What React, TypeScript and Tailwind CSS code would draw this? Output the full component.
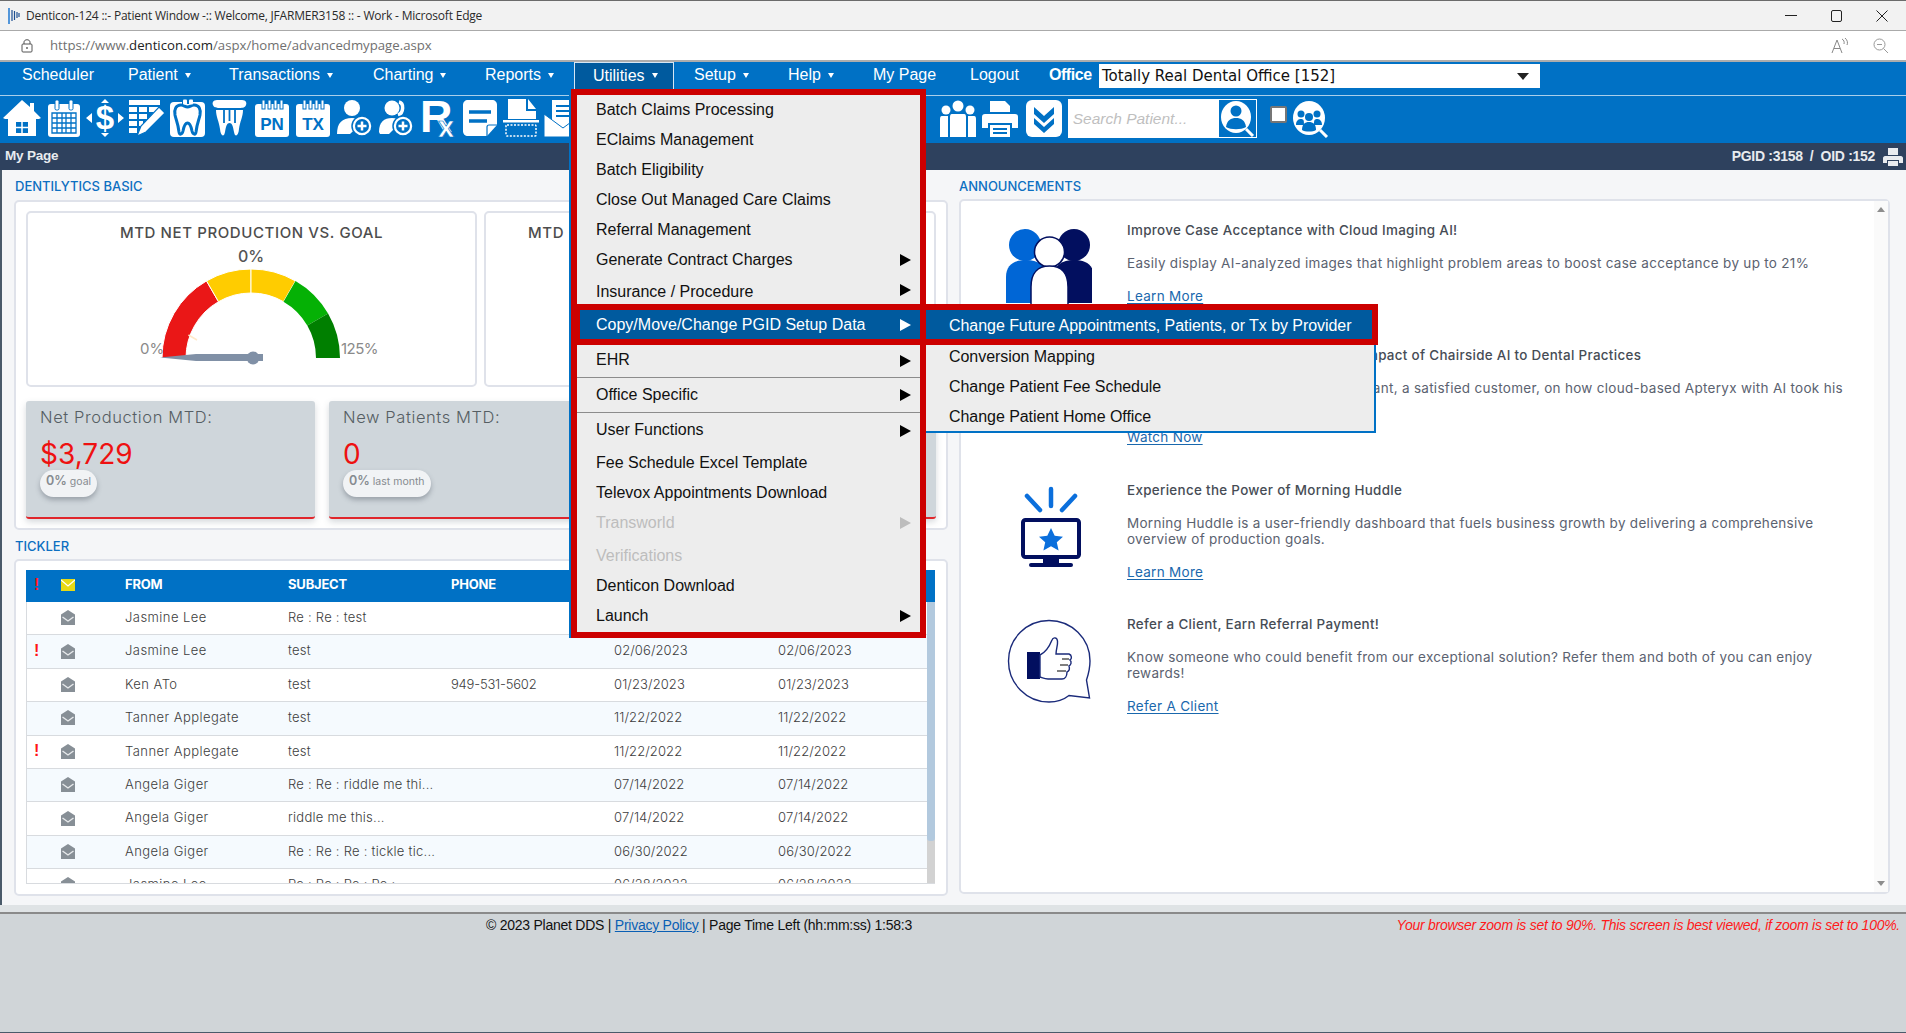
import React from "react";

const B = "#0071c5";

function Ico({ children }: { children: React.ReactNode }) {
  return (
    <svg width="38" height="38" viewBox="0 0 38 38" className="shrink-0">
      {children}
    </svg>
  );
}

function Rings() {
  return (
    <>
      <rect x="2" y="5" width="34" height="33" rx="3" fill="#fff" />
      {[9, 15, 21, 27].map((x) => (
        <rect key={x} x={x} y="1" width="3" height="9" fill="#fff" stroke={B} strokeWidth="1" />
      ))}
    </>
  );
}

const toolIcons: React.ReactNode[] = [
  <Ico key="home">
    <path fill="#fff" d="M19 1 L27 8 V4 H31 V12 L38 19 L36 20 H33 V37 H5 V20 H2 L0 19Z" />
    <rect x="13" y="23" width="12" height="11" fill={B} />
    <path d="M19 23V34M13 28.5H25" stroke="#fff" strokeWidth="1.5" />
  </Ico>,
  <Ico key="cal">
    <rect x="3" y="5" width="32" height="33" rx="3" fill="#fff" />
    <rect x="10" y="1" width="4" height="10" rx="1.5" fill="#fff" stroke={B} strokeWidth="1" />
    <rect x="24" y="1" width="4" height="10" rx="1.5" fill="#fff" stroke={B} strokeWidth="1" />
    <path d="M7 14H31V34H7ZM7 19H31M7 24H31M7 29H31M12 14V34M17 14V34M21 14V34M26 14V34" fill="none" stroke={B} strokeWidth="1.3" />
  </Ico>,
  <Ico key="dollar">
    <text x="19" y="30" textAnchor="middle" fontSize="33" fontWeight="700" fill="#fff" fontFamily="Liberation Sans">$</text>
    <path fill="#fff" d="M0 19L6 14V24ZM38 19L32 14V24ZM19 0L15 4H23ZM19 38L15 34H23Z" />
  </Ico>,
  <Ico key="edit">
    <path fill="#fff" d="M1 1H32V6H1ZM1 8H9V13H1ZM11 8H19V13H11ZM21 8H30V13H21ZM1 15H9V20H1ZM11 15H19V20H11ZM1 22H9V27H1ZM11 22H15V27H11ZM1 29H9V34H1Z" />
    <path fill="#fff" stroke={B} strokeWidth="1.2" d="M31 8L37 14L18 33L9 37L13 27Z" />
  </Ico>,
  <Ico key="tooth">
    <rect x="1" y="3" width="35" height="35" rx="4" fill="#fff" />
    <path fill="#fff" stroke={B} strokeWidth="3" d="M12 6C7 6 5 10 6 16C7 21 9 24 10 33C10.5 36 13 36 14 32C15 27 16 24 18.5 24C21 24 22 27 23 32C24 36 26.5 36 27 33C28 24 30 21 31 16C32 10 30 6 25 6C22 6 21 8 18.5 8C16 8 15 6 12 6Z" />
    <rect x="13" y="0" width="11" height="5" fill={B} />
    <rect x="14" y="0.5" width="4" height="5" rx="1" fill="#fff" />
    <rect x="20" y="0.5" width="4" height="5" rx="1" fill="#fff" />
  </Ico>,
  <Ico key="crown">
    <path fill="#fff" d="M6 1H31C35 1 36 4 35 6C34 9 31 9 27 9H10C6 9 3 9 2 6C1 4 2 1 6 1Z" />
    <path fill="#fff" d="M5 11H32C32 18 29 22 28 30C27.5 37 24 39 23 33C22 27 21 24 18.5 24C16 24 15 27 14 33C13 39 9.5 37 9 30C8 22 5 18 5 11Z" />
    <path d="M13 11V24M18.5 11V22M24 11V24" stroke={B} strokeWidth="1.8" />
  </Ico>,
  <Ico key="pn">
    <Rings />
    <text x="19" y="31" textAnchor="middle" fontSize="17" fontWeight="700" fill={B} fontFamily="Liberation Sans">PN</text>
  </Ico>,
  <Ico key="tx">
    <Rings />
    <text x="19" y="31" textAnchor="middle" fontSize="17" fontWeight="700" fill={B} fontFamily="Liberation Sans">TX</text>
  </Ico>,
  <Ico key="addp">
    <circle cx="16" cy="9" r="8" fill="#fff" />
    <path fill="#fff" d="M1 35C1 24 6 19 16 19C20 19 24 21 26 24L14 35Z" />
    <circle cx="26" cy="27" r="10" fill="#fff" stroke={B} strokeWidth="1.5" />
    <circle cx="26" cy="27" r="7" fill={B} />
    <path d="M26 22.5V31.5M21.5 27H30.5" stroke="#fff" strokeWidth="2.5" />
  </Ico>,
  <Ico key="addps">
    <circle cx="15" cy="9" r="7.5" fill="#fff" />
    <path fill="none" stroke="#fff" strokeWidth="3.5" d="M22 3C27 4 27 14 21 16" />
    <path fill="#fff" d="M2 33C2 23 7 19 15 19C19 19 22 20 24 23L12 35H3Z" />
    <circle cx="26" cy="27" r="10" fill="#fff" stroke={B} strokeWidth="1.5" />
    <circle cx="26" cy="27" r="7" fill={B} />
    <path d="M26 22.5V31.5M21.5 27H30.5" stroke="#fff" strokeWidth="2.5" />
  </Ico>,
  <Ico key="rx">
    <text x="1" y="33" fontSize="45" fontWeight="700" fill="#fff" fontFamily="Liberation Sans">R</text>
    <text x="19" y="37.5" fontSize="29" fontWeight="700" fill="#fff" stroke={B} strokeWidth="0.6" fontFamily="Liberation Sans">x</text>
  </Ico>,
  <Ico key="note">
    <path fill="#fff" d="M7 1H31C34 1 36 3 36 6V26L26 37H7C4 37 2 35 2 32V6C2 3 4 1 7 1Z" />
    <path d="M8 13H30M8 22H26" stroke={B} strokeWidth="3.5" />
    <path d="M26 37V28C26 27 27 26 28 26H36" fill="none" stroke={B} strokeWidth="1.2" />
  </Ico>,
  <Ico key="scan">
    <path fill="#fff" d="M6 0H24V12H34V20H6ZM26 0L34 10H26Z" />
    <rect x="1" y="21" width="36" height="2.5" fill="#fff" />
    <rect x="4" y="26" width="30" height="11" rx="1" fill="none" stroke="#fff" strokeWidth="1.5" strokeDasharray="2 1.5" />
  </Ico>,
  <Ico key="mail">
    <path fill="#fff" d="M8 1H36V20L20 30L8 22Z" />
    <path d="M12 7H32M12 12H32M12 17H28" stroke={B} strokeWidth="2" />
    <path fill="#fff" stroke={B} strokeWidth="1" d="M0 15L19 29L38 15V38H0Z" />
  </Ico>,
];

const navItems = [
  { t: "Scheduler", w: "w-[106px]" },
  { t: "Patient", w: "w-[101px]", a: true },
  { t: "Transactions", w: "w-[144px]", a: true },
  { t: "Charting", w: "w-[112px]", a: true },
  { t: "Reports", w: "w-[89px]", a: true },
];
const navItems2 = [
  { t: "Setup", w: "w-[114px] pl-[20px]", a: true },
  { t: "Help", w: "w-[85px]", a: true },
  { t: "My Page", w: "w-[97px]" },
  { t: "Logout", w: "w-[79px]" },
];

function Caret() {
  return <span className="ml-[7px] inline-block border-x-[3px] border-t-[5px] border-x-transparent border-t-white align-middle" />;
}

function MailOpen() {
  return (
    <svg width="14" height="15" viewBox="0 0 14 15">
      <path fill="#878f96" d="M7 0L14 4.5V15H0V4.5Z" />
      <path d="M1.5 7L7 11L12.5 7" fill="none" stroke="#e8eaec" strokeWidth="1.4" />
    </svg>
  );
}

const rows = [
  { f: false, from: "Jasmine Lee", sub: "Re : Re : test", ph: "", d: "" },
  { f: true, from: "Jasmine Lee", sub: "test", ph: "", d: "02/06/2023" },
  { f: false, from: "Ken ATo", sub: "test", ph: "949-531-5602", d: "01/23/2023" },
  { f: false, from: "Tanner Applegate", sub: "test", ph: "", d: "11/22/2022" },
  { f: true, from: "Tanner Applegate", sub: "test", ph: "", d: "11/22/2022" },
  { f: false, from: "Angela Giger", sub: "Re : Re : riddle me thi...", ph: "", d: "07/14/2022" },
  { f: false, from: "Angela Giger", sub: "riddle me this...", ph: "", d: "07/14/2022" },
  { f: false, from: "Angela Giger", sub: "Re : Re : Re : tickle tic...", ph: "", d: "06/30/2022" },
  { f: false, from: "Jasmine Lee", sub: "Re : Re : Re : Re :", ph: "", d: "06/28/2022" },
];

function Gauge() {
  const cx = 251 - 28;
  const cy = 358 - 213;
  const R = 89;
  const r = 65;
  const seg = (a: number, b: number) => {
    const p = (rad: number, deg: number) => {
      const t = (deg * Math.PI) / 180;
      return `${(cx + rad * Math.cos(t)).toFixed(2)} ${(cy - rad * Math.sin(t)).toFixed(2)}`;
    };
    return `M${p(R, a)} A${R} ${R} 0 0 1 ${p(R, b)} L${p(r, b)} A${r} ${r} 0 0 0 ${p(r, a)} Z`;
  };
  const segs: [number, number, string][] = [
    [180, 120, "#ea1717"],
    [120, 90, "#ffcc00"],
    [90, 60, "#ffcc00"],
    [60, 30, "#05b105"],
    [30, 0, "#007f00"],
  ];
  return (
    <svg width="449" height="174" viewBox="0 0 449 174" className="absolute left-0 top-0">
      {segs.map(([a, b, c], i) => (
        <path key={i} d={seg(a, b)} fill={c} stroke="#fff" strokeWidth={i === 4 || i === 3 ? 0 : 1} />
      ))}
      <path d="M160.5 122L169 127" stroke="#ffe9c9" strokeWidth="1.6" />
      <text x={cx} y={49} textAnchor="middle" fontSize="16" fontWeight="500" fill="#555" fontFamily="Inter">0%</text>
      <text x="112" y="141" fontSize="15" fill="#8a8a8a" fontFamily="Inter">0%</text>
      <text x="313" y="141" fontSize="15" letterSpacing="-0.5" fill="#8a8a8a" fontFamily="Inter">125%</text>
      <path d="M132 144.5L168 141H235V148H168Z" fill="#8090a6" />
      <circle cx="225" cy="145" r="6.5" fill="#8090a6" />
    </svg>
  );
}

function Arrow({ white, gray }: { white?: boolean; gray?: boolean }) {
  return (
    <svg width="11" height="12" viewBox="0 0 11 12" className="absolute right-[9px] top-1/2 -translate-y-1/2">
      <path d="M0 0L11 6L0 12Z" fill={white ? "#fff" : gray ? "#bdbdbd" : "#000"} />
    </svg>
  );
}

function MI({ t, h, arrow, gray, extra }: { t: string; h: string; arrow?: boolean; gray?: boolean; extra?: string }) {
  return (
    <div className={`relative flex items-center pl-[19px] ${h} ${extra ?? ""} ${gray ? "text-[#bdbdbd]" : "text-[#111]"}`}>
      {t}
      {arrow && <Arrow gray={gray} />}
    </div>
  );
}

function SectionLabel({ t }: { t: string }) {
  return <div className="h-[16px] text-[13px] leading-[16px] font-medium text-[#0d6fc1]">{t}</div>;
}

function Stat({ label, value, pct, sub, w }: { label: string; value: string; pct: string; sub: string; w: string }) {
  return (
    <div className={`h-[118px] rounded-[3px] border-b-2 border-[#e0262b] bg-[#cfd6db] pl-[14px] pt-[6px] shadow-[0_3px_6px_rgba(120,130,140,0.3)] ${w}`}>
      <div className="h-[20px] text-[16.5px] leading-[20px] font-light tracking-[0.6px] text-[#565e63]">{label}</div>
      <div className="mt-[9px] h-[36px] text-[28px] leading-[36px] text-[#ee1111]">{value}</div>
      <div className="mt-[-2px] flex h-[27px] w-fit items-start gap-[3px] rounded-[14px] bg-[#f1f3f5] px-[6px] pt-[3px] leading-[16px] text-[#868b90] shadow-[0_3px_5px_rgba(90,100,110,0.45)]">
        <span className="text-[12.5px] font-semibold">{pct}</span>
        <span className="mt-[1px] text-[10.5px]">{sub}</span>
      </div>
    </div>
  );
}

function Ann({
  title,
  body,
  link,
  icon,
  mt,
}: {
  title: string;
  body: React.ReactNode;
  link: string;
  icon?: React.ReactNode;
  mt: string;
}) {
  return (
    <div className={`relative pl-[166px] ${mt}`}>
      {icon}
      <div className="h-[16px] whitespace-nowrap text-[13.4px] leading-[16px] font-medium tracking-[0.32px] text-[#464c55]">{title}</div>
      <div className="mt-[17px] whitespace-nowrap text-[13.5px] leading-[16px] tracking-[0.29px] text-[#5b6270]">{body}</div>
      <div className="mt-[17px] h-[16px] text-[13.5px] leading-[16px] tracking-[0.29px] text-[#1a68ad]">
        <a className="underline underline-offset-2">{link}</a>
      </div>
    </div>
  );
}

export default function App() {
  return (
    <div className="relative flex h-[1033px] w-[1906px] flex-col overflow-hidden bg-[#f5f6f8] font-['Liberation_Sans',sans-serif]">
      {/* Title bar */}
      <div className="flex h-[31px] shrink-0 items-center border-y border-t-[#6b6b6b] border-b-[#aaaaaa] bg-[#f2f2f2] pl-[8px] font-['Open_Sans',sans-serif] text-[12px] text-[#2b2b2b]">
        <svg width="12" height="16" viewBox="0 0 12 16" className="mr-[6px]">
          <path d="M1 0V16" stroke="#2b7fd4" strokeWidth="1.6" />
          <path d="M4 2V13M6.5 3V12M9 4V10M11 5V9" stroke="#1d4f91" strokeWidth="1.2" />
        </svg>
        <span className="tracking-[-0.2px]">Denticon-124 ::- Patient Window -:: Welcome, JFARMER3158 :: - Work - Microsoft Edge</span>
        <div className="ml-auto flex items-center">
          <span className="mr-[34px] h-px w-[12px] bg-[#222]" />
          <span className="mr-[34px] h-[12px] w-[11px] rounded-[2px] border border-[#222]" />
          <svg width="12" height="12" viewBox="0 0 12 12" className="mr-[18px]">
            <path d="M0.5 0.5L11.5 11.5M11.5 0.5L0.5 11.5" stroke="#222" strokeWidth="1" />
          </svg>
        </div>
      </div>
      {/* URL bar */}
      <div className="flex h-[31px] shrink-0 items-center border-b-2 border-[#adadad] bg-white pl-[21px] font-['Open_Sans',sans-serif] text-[13.2px] text-[#707070]">
        <svg width="12" height="15" viewBox="0 0 12 15" className="mr-[17px]">
          <path d="M3 6V4C3 1 9 1 9 4V6" fill="none" stroke="#555" />
          <rect x="1" y="6" width="10" height="8" rx="1" fill="none" stroke="#555" />
          <circle cx="6" cy="10" r="0.9" fill="#555" />
        </svg>
        <span>
          https://www.<span className="text-[#222]">denticon.com</span>/aspx/home/advancedmypage.aspx
        </span>
        <div className="ml-auto flex items-center">
          <svg width="18" height="16" viewBox="0 0 18 16" className="mr-[24px]">
            <path d="M1 15L6 2L11 15M3 10.5H9" fill="none" stroke="#888" strokeWidth="1" />
            <path d="M11 1C13 2 13.5 4 13 6M14 0C16.5 2 17 5 16 7" fill="none" stroke="#888" strokeWidth="1" />
          </svg>
          <svg width="16" height="16" viewBox="0 0 16 16" className="mr-[17px]">
            <circle cx="6.5" cy="6.5" r="5.5" fill="none" stroke="#999" />
            <path d="M4 6.5H9M10.5 10.5L15 15" stroke="#999" />
          </svg>
        </div>
      </div>
      {/* Nav */}
      <div className="flex h-[34px] shrink-0 items-stretch border-b border-[#a9cfeb] bg-[#0071c5] pl-[22px] text-[16px] text-white">
        {navItems.map((n) => (
          <div key={n.t} className={`flex shrink-0 items-center pb-[7px] ${n.w}`}>
            {n.t}
            {n.a && <Caret />}
          </div>
        ))}
        <div className="flex w-[100px] shrink-0 items-center border border-b-0 border-[#d5e6f4] bg-[#005a9e] pb-[7px] pl-[18px]">
          Utilities
          <Caret />
        </div>
        {navItems2.map((n) => (
          <div key={n.t} className={`flex shrink-0 items-center pb-[7px] ${n.w}`}>
            {n.t}
            {n.a && <Caret />}
          </div>
        ))}
        <div className="flex w-[50px] shrink-0 items-center pb-[7px] font-bold tracking-[-0.45px]">Office</div>
        <div className="mt-[2px] flex h-[24px] w-[441px] shrink-0 items-center bg-white pl-[3px] pt-px font-['DejaVu_Sans',sans-serif] text-[15px] text-[#111]">
          Totally Real Dental Office [152]
          <span className="ml-auto mr-[11px] border-x-[6px] border-t-[7px] border-x-transparent border-t-[#222]" />
        </div>
      </div>
      {/* Toolbar */}
      <div className="flex h-[47px] shrink-0 items-start bg-[#0071c5] pl-[3px] pt-[3px]">
        <div className="flex gap-[3.6px]">{toolIcons}</div>
        <div className="ml-[357px] flex items-center">
          <svg width="38" height="38" viewBox="0 0 38 38">
            <circle cx="19" cy="6" r="5.5" fill="#fff" />
            <circle cx="7" cy="10" r="4.5" fill="#fff" />
            <circle cx="31" cy="10" r="4.5" fill="#fff" />
            <path fill="#fff" d="M13 14H25C27 14 27 16 27 18V37H11V18C11 16 11 14 13 14Z" />
            <path fill="#fff" d="M3 16H9V37H1V20C1 18 1 16 3 16ZM29 16H35C37 16 37 18 37 20V37H29Z" />
          </svg>
          <svg width="38" height="38" viewBox="0 0 38 38" className="ml-[4px]">
            <path fill="#fff" d="M9 1H24L29 6V12H9Z" />
            <path fill="#fff" d="M4 14H34C36 14 37 15 37 17V28H31V23H7V28H1V17C1 15 2 14 4 14Z" />
            <path fill="#fff" d="M9 25H29V37H9Z" />
            <path d="M12 29H26M12 33H26" stroke={B} strokeWidth="2" />
          </svg>
          <svg width="38" height="38" viewBox="0 0 38 38" className="ml-[6px]">
            <rect x="1" y="0" width="36" height="37" rx="6" fill="#fff" />
            <path d="M9 7L19 16L29 7V14L19 23L9 14ZM9 18L19 27L29 18V24L19 33L9 24Z" fill={B} />
          </svg>
          <div className="ml-[5px] flex h-[39px] w-[189px] items-center border border-white bg-white pl-[4px] font-['Liberation_Sans'] text-[15.5px] italic text-[#bfbfbf]">
            Search Patient...
            <span className="ml-auto flex h-[37px] w-[37px] items-center justify-center bg-[#0071c5]">
              <svg width="36" height="37" viewBox="0 0 36 37">
                <ellipse cx="17" cy="17" rx="15" ry="16" fill="#fff" />
                <circle cx="17" cy="11" r="5.5" fill={B} />
                <path d="M7 27C8 20 12 18 17 18C22 18 26 20 27 27C22 30 12 30 7 27Z" fill={B} />
                <path d="M27 29L34 36" stroke="#fff" strokeWidth="3" />
              </svg>
            </span>
          </div>
          <span className="mb-[8px] ml-[13px] h-[17px] w-[17px] rounded-[2px] border-2 border-[#767676] bg-white" />
          <svg width="38" height="38" viewBox="0 0 38 38" className="ml-[5px]">
            <ellipse cx="17" cy="18" rx="16" ry="17" fill="#fff" />
            <g fill={B}>
              <circle cx="9" cy="14" r="3.5" />
              <circle cx="25" cy="14" r="3.5" />
              <circle cx="17" cy="17" r="4" />
              <path d="M4 25C4 20 7 19 9 19C12 19 12 21 12 25ZM22 25C22 21 22 19 25 19C27 19 30 20 30 25Z" />
              <path d="M10 30C10 24 13 22 17 22C21 22 24 24 24 30C21 32 13 32 10 30Z" />
            </g>
            <path d="M28 30L35 37" stroke="#fff" strokeWidth="3" />
          </svg>
        </div>
      </div>
      {/* Page title bar */}
      <div className="flex h-[27px] shrink-0 items-center justify-between bg-[#2e415e] pl-[5px] pr-[3px] font-bold text-[#e8ebef]">
        <span className="text-[13.5px] tracking-[-0.2px]">My Page</span>
        <span className="flex items-center text-[14px] tracking-[-0.3px]">
          PGID :3158 &nbsp;/&nbsp; OID :152
          <svg width="20" height="20" viewBox="0 0 20 20" className="ml-[8px]">
            <path fill="#e8ebef" d="M5 1H15V8H5ZM2 9H18C19 9 20 10 20 11V16H16V13H4V16H0V11C0 10 1 9 2 9ZM5 14H15V19H5Z" />
          </svg>
        </span>
      </div>
      {/* Main */}
      <div className="flex min-h-0 flex-1 border-l-2 border-[#4a5a6a] font-['Inter',sans-serif]">
        <div className="flex w-[946px] shrink-0 flex-col pl-[12px] pt-[8px]">
          <div className="pl-px">
            <SectionLabel t="DENTILYTICS BASIC" />
          </div>
          <div className="mt-[6px] h-[330px] rounded-[5px] border-2 border-[#dfe2ea] bg-white px-[10px] pt-[9px]">
            <div className="flex gap-[7px]">
              <div className="relative h-[176px] w-[451px] shrink-0 rounded-[5px] border-2 border-[#dfe2ea] bg-white">
                <Gauge />
                <div className="relative pt-[11px] text-center text-[15px] leading-[18px] font-medium tracking-[0.6px] text-[#4d4d4d]">MTD NET PRODUCTION VS. GOAL</div>
              </div>
              <div className="h-[176px] flex-1 rounded-[5px] border-2 border-[#dfe2ea] bg-white pl-[42px] pt-[11px] text-[15px] leading-[18px] font-medium tracking-[0.6px] text-[#4d4d4d]">MTD COLLECTIONS VS. GOAL</div>
            </div>
            <div className="mt-[14px] flex gap-[14px]">
              <Stat w="w-[289px]" label="Net Production MTD:" value="$3,729" pct="0%" sub="goal" />
              <Stat w="w-[289px]" label="New Patients MTD:" value="0" pct="0%" sub="last month" />
              <Stat w="flex-1" label="Collections MTD:" value="$0" pct="0%" sub="goal" />
            </div>
          </div>
          <div className="mt-[8px] pl-px">
            <SectionLabel t="TICKLER" />
          </div>
          <div className="mt-[5px] h-[337px] rounded-[5px] border-2 border-[#dfe2ea] bg-white pl-[10px] pr-[11px] pt-[9px]">
            <div className="relative h-[314px] overflow-hidden border-b border-[#d8dbdf]">
              <div className="flex h-[32px] items-center bg-[#0071c5] pb-[3px] text-[13px] font-bold tracking-[-0.2px] text-white">
                <span className="w-[35px] pl-[8px] font-['Liberation_Sans'] text-[16px] text-[#ff1414]">!</span>
                <span className="w-[64px] pl-[0px]">
                  <svg width="14" height="12" viewBox="0 0 14 12">
                    <rect width="14" height="12" fill="#e7da16" />
                    <path d="M0 1L7 7L14 1" fill="none" stroke="#fff" strokeWidth="1.2" />
                  </svg>
                </span>
                <span className="w-[163px]">FROM</span>
                <span className="w-[163px]">SUBJECT</span>
                <span className="w-[163px]">PHONE</span>
              </div>
              {rows.map((r, i) => (
                <div
                  key={i}
                  className={`flex h-[33.4px] items-center border-b border-l border-[#d8dbdf] pb-px text-[13px] font-light text-[#3d3d3d] ${i % 2 === 1 ? "bg-[#f5fafe]" : "bg-white"}`}
                >
                  <span className="w-[34px] pl-[7px] font-['Liberation_Sans'] text-[16px] font-bold text-[#ff1414]">{r.f ? "!" : ""}</span>
                  <span className="flex w-[64px] items-center">
                    <MailOpen />
                  </span>
                  <span className="w-[163px] whitespace-nowrap tracking-[0.45px]">{r.from}</span>
                  <span className="w-[163px] whitespace-nowrap tracking-[0.25px]">{r.sub}</span>
                  <span className="w-[163px] whitespace-nowrap tracking-[-0.2px]">{r.ph}</span>
                  <span className="w-[164px] tracking-[0.1px]">{r.d}</span>
                  <span className="w-[140px] tracking-[0.1px]">{r.d}</span>
                </div>
              ))}
              <div className="absolute right-0 top-[32px] bottom-0 w-[8px] bg-[#d2d2d2]">
                <div className="h-[239px] rounded-b-[3px] bg-[#b2c9de]" />
              </div>
            </div>
          </div>
        </div>
        <div className="ml-[11px] flex w-[931px] shrink-0 flex-col pt-[8px]">
          <SectionLabel t="ANNOUNCEMENTS" />
          <div className="relative mt-[5px] h-[695px] rounded-[5px] border-2 border-[#dfe2ea] bg-white pt-[21px]">
            <div className="absolute right-0 top-0 flex h-full w-[14px] flex-col items-center justify-between bg-[#fafafa] py-[6px]">
              <span className="border-x-[4px] border-b-[5px] border-x-transparent border-b-[#8d8d8d]" />
              <span className="border-x-[4px] border-t-[5px] border-x-transparent border-t-[#8d8d8d]" />
            </div>
            <Ann
              mt="mt-0"
              title="Improve Case Acceptance with Cloud Imaging AI!"
              body="Easily display AI-analyzed images that highlight problem areas to boost case acceptance by up to 21%"
              link="Learn More"
              icon={
                <svg width="88" height="120" viewBox="0 0 88 120" className="absolute left-[43px] top-[5px]">
                  <circle cx="21" cy="18" r="16" fill="#0066d6" />
                  <circle cx="70" cy="18" r="16" fill="#020f5f" />
                  <path d="M2 76V50C2 38 10 33 22 33C34 33 42 38 42 50V76Z" fill="#0066d6" />
                  <path d="M50 76V50C50 38 58 33 70 33C82 33 90 38 90 50V76Z" fill="#020f5f" />
                  <circle cx="45.5" cy="25" r="15" fill="#fff" stroke="#020f5f" strokeWidth="1.5" />
                  <path d="M27 120V60C27 46 34 39 45.5 39C57 39 64 46 64 60V120Z" fill="#fff" stroke="#020f5f" strokeWidth="1.5" />
                </svg>
              }
            />
            <Ann
              mt="mt-[43px]"
              title="Hear Us on the Real-World Clinical Impact of Chairside AI to Dental Practices"
              body={
                <>
                  Watch Dr. Jo Lee, a Denticon consultant, a satisfied customer, on how cloud-based Apteryx with AI took his
                  <br />
                  practice further
                </>
              }
              link="Watch Now"
            />
            <Ann
              mt="mt-[37px]"
              title="Experience the Power of Morning Huddle"
              body={
                <>
                  Morning Huddle is a user-friendly dashboard that fuels business growth by delivering a comprehensive
                  <br />
                  overview of production goals.
                </>
              }
              link="Learn More"
              icon={
                <svg width="62" height="82" viewBox="0 0 62 82" className="absolute left-[59px] top-[4px]">
                  <path d="M31 3V20M7 10L20 24M55 10L42 24" stroke="#0b6fdc" strokeWidth="4.5" strokeLinecap="round" fill="none" />
                  <rect x="3" y="34" width="56" height="37" rx="2.5" fill="none" stroke="#020f5f" strokeWidth="4" />
                  <path d="M31 42L34.7 49.8L43 50.7L36.8 56.3L38.6 64.6L31 60.3L23.4 64.6L25.2 56.3L19 50.7L27.3 49.8Z" fill="#0b6fdc" />
                  <path d="M23 71H39V77H23Z" fill="#020f5f" />
                  <rect x="9" y="77" width="44" height="4" rx="2" fill="#020f5f" />
                </svg>
              }
            />
            <Ann
              mt="mt-[36px]"
              title="Refer a Client, Earn Referral Payment!"
              body={
                <>
                  Know someone who could benefit from our exceptional solution? Refer them and both of you can enjoy
                  <br />
                  rewards!
                </>
              }
              link="Refer A Client"
              icon={
                <svg width="86" height="86" viewBox="0 0 86 86" className="absolute left-[46px] top-[3px]">
                  <path d="M42 1.5C19.5 1.5 1.5 19.5 1.5 42C1.5 64.5 19.5 83 42 83C50 83 57 80.5 62 76.5L82.5 79L79.5 61C81.5 55 83 49 83 42C83 19.5 64.5 1.5 42 1.5Z" fill="#fff" stroke="#1a2a7a" strokeWidth="1.4" />
                  <rect x="20" y="33" width="13" height="27" fill="#020f5f" />
                  <path d="M33 36C39 33 43 26 45 21C46 18 50 18 50.5 22C51 26 49 30 49 35H62C65 36 65 40 63 41C65 43 64 46 62 47C63 50 62 52 60 53C60 57 58 60 55 60H41C38 60 36 59 33 58Z" fill="#fff" stroke="#1a2a7a" strokeWidth="1.4" />
                  <path d="M55 40H62M53 46H61M50 52H59" stroke="#555" strokeWidth="1.4" />
                </svg>
              }
            />
          </div>
        </div>
      </div>
      {/* Footer */}
      <div className="h-[7px] shrink-0 bg-[#dfe3e5]" />
      <div className="flex h-[121px] shrink-0 items-start justify-between border-b border-t-2 border-b-[#4a5a6a] border-t-[#8a8a8a] bg-[#d0d5d8] pl-[486px] pr-[6px] pt-[3px] text-[14px] leading-[16px]">
        <span className="text-[#111] tracking-[-0.25px]">
          © 2023 Planet DDS | <a className="text-[#0a5fb4] underline">Privacy Policy</a> | Page Time Left (hh:mm:ss) 1:58:3
        </span>
        <span className="italic tracking-[-0.26px] text-[#ff1a1a]">Your browser zoom is set to 90%. This screen is best viewed, if zoom is set to 100%.</span>
      </div>

      {/* Utilities dropdown */}
      <div className="absolute left-[569px] top-[89px] w-[357px] border-l-2 border-[#0071c5] text-[16px] leading-[20px]">
        <div className="border-[6px] border-[#cc0000] bg-[#ededed]">
          {[
            "Batch Claims Processing",
            "EClaims Management",
            "Batch Eligibility",
            "Close Out Managed Care Claims",
            "Referral Management",
          ].map((t) => (
            <MI key={t} t={t} h="h-[30px]" />
          ))}
          <MI t="Generate Contract Charges" h="h-[30px]" arrow />
          <MI t="Insurance / Procedure" h="h-[29px] pt-[4px]" arrow />
          <div className="flex h-[41px] border-y-[6px] border-[#cc0000] bg-[#cc0000] pl-[3px] text-white">
            <div className="relative flex w-full items-center bg-[#005a9e] pl-[16px]">
              Copy/Move/Change PGID Setup Data
              <Arrow white />
            </div>
          </div>
          <MI t="EHR" h="h-[33px] pb-[2px]" arrow extra="border-b border-[#8c8c8c]" />
          <MI t="Office Specific" h="h-[35px]" arrow extra="border-b border-[#8c8c8c]" />
          <MI t="User Functions" h="h-[35px] pb-[1px]" arrow />
          <MI t="Fee Schedule Excel Template" h="h-[30px]" />
          <MI t="Televox Appointments Download" h="h-[30px]" />
          <MI t="Transworld" h="h-[30px]" arrow gray />
          <MI t="Verifications" h="h-[33px] pt-[3px]" gray />
          <MI t="Denticon Download" h="h-[29px]" />
          <MI t="Launch" h="h-[32px] pb-[1px]" arrow />
        </div>
      </div>
      {/* Submenu */}
      <div className="absolute left-[926px] top-[304px] w-[452px] text-[16px] leading-[20px] tracking-[-0.05px]">
        <div className="flex h-[41px] items-center border-y-[6px] border-r-[6px] border-[#cc0000] bg-[#005a9e] pl-[23px] pt-[3px] text-white">
          Change Future Appointments, Patients, or Tx by Provider
        </div>
        <div className="mr-[2px] border-b-[2px] border-r-[2px] border-[#0071c5] bg-[#ededed] pl-[23px] text-[#111]">
          <div className="flex h-[26px] items-center pb-[2px]">Conversion Mapping</div>
          <div className="flex h-[30px] items-center pt-[2px]">Change Patient Fee Schedule</div>
          <div className="flex h-[30px] items-center pt-[2px]">Change Patient Home Office</div>
        </div>
      </div>
    </div>
  );
}
